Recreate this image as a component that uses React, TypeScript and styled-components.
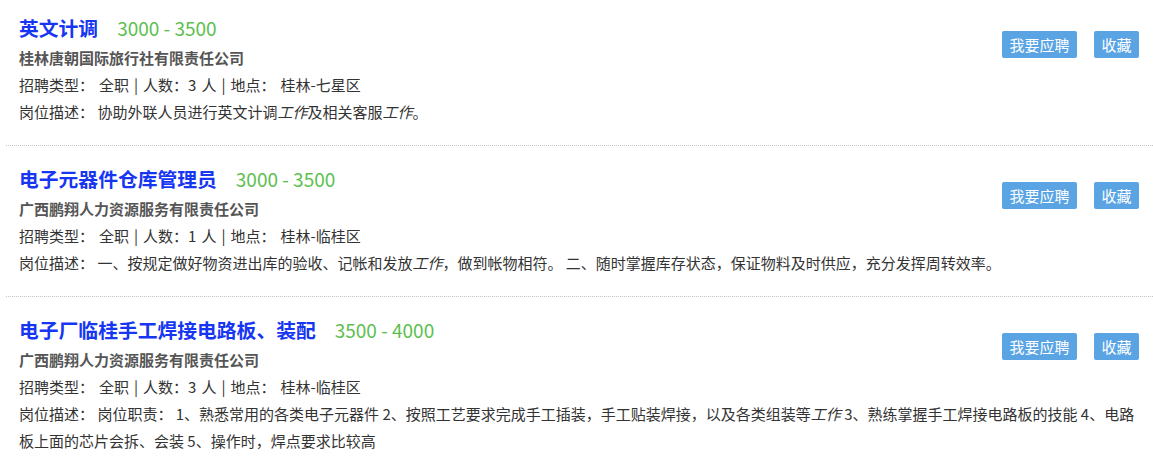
import React from "react";
import styled, { createGlobalStyle } from "styled-components";

const GlobalStyle = createGlobalStyle`
  html, body { margin: 0; padding: 0; background: #fff; }
  body { font-family: "Noto Sans CJK SC", "Microsoft YaHei", sans-serif; }
`;

const List = styled.ul`
  list-style: none;
  margin: 0 0 0 6px;
  padding: 0;
`;

const Item = styled.li`
  display: grid;
  grid-template-columns: 1fr auto;
  padding: 17px 14px 20px 13px;
  border-bottom: 1px dotted #c4c4c4;
  &:first-child { padding-top: 12px; }
  &:last-child { border-bottom: none; }
`;

const Main = styled.div`
  grid-column: 1;
`;

const TitleRow = styled.div`
  display: flex;
  align-items: baseline;
  height: 32px;
  line-height: 32px;
`;

const Title = styled.a`
  font-size: 19.8px;
  font-weight: bold;
  color: #1736f2;
  text-decoration: none;
`;

const Salary = styled.span`
  margin-left: 19px;
  font-size: 19px;
  color: #5cbf4e;
`;

const Company = styled.div`
  font-size: 15px;
  font-weight: bold;
  color: #555;
  line-height: 27px;
`;

const Line = styled.div<{ $span?: boolean }>`
  font-size: 15px;
  color: #333;
  line-height: 27px;
  grid-column: ${(p) => (p.$span ? "1 / -1" : "1")};
`;

const Sep = styled.span`
  margin: 0 5px;
`;

const Gap = styled.span`
  display: inline-block;
  width: 5px;
`;

const Actions = styled.div`
  grid-column: 2;
  grid-row: 1;
  display: flex;
  gap: 17px;
  align-items: flex-start;
  margin-top: 19px;
`;

const Btn = styled.button`
  height: 27px;
  padding: 0 7.5px;
  border: none;
  border-radius: 2px;
  background: #5aa4e4;
  color: #fff;
  font-family: inherit;
  font-size: 15px;
  line-height: 27px;
  cursor: pointer;
`;

type Job = {
  title: string;
  salary: string;
  company: string;
  count: number;
  place: string;
  desc: React.ReactNode;
};

const jobs: Job[] = [
  {
    title: "英文计调",
    salary: "3000 - 3500",
    company: "桂林唐朝国际旅行社有限责任公司",
    count: 3,
    place: "桂林-七星区",
    desc: (
      <>
        协助外联人员进行英文计调<em>工作</em>及相关客服<em>工作</em>。
      </>
    ),
  },
  {
    title: "电子元器件仓库管理员",
    salary: "3000 - 3500",
    company: "广西鹏翔人力资源服务有限责任公司",
    count: 1,
    place: "桂林-临桂区",
    desc: (
      <>
        一、按规定做好物资进出库的验收、记帐和发放<em>工作</em>，做到帐物相符。 二、随时掌握库存状态，保证物料及时供应，充分发挥周转效率。
      </>
    ),
  },
  {
    title: "电子厂临桂手工焊接电路板、装配",
    salary: "3500 - 4000",
    company: "广西鹏翔人力资源服务有限责任公司",
    count: 3,
    place: "桂林-临桂区",
    desc: (
      <>
        岗位职责： 1、熟悉常用的各类电子元器件 2、按照工艺要求完成手工插装，手工贴装焊接，以及各类组装等<em>工作</em> 3、熟练掌握手工焊接电路板的技能 4、电路板上面的芯片会拆、会装 5、操作时，焊点要求比较高
      </>
    ),
  },
];

export default function App() {
  return (
    <>
      <GlobalStyle />
      <List>
        {jobs.map((j, i) => (
          <Item key={i}>
            <Main>
              <TitleRow>
                <Title href="#">{j.title}</Title>
                <Salary>{j.salary}</Salary>
              </TitleRow>
              <Company>{j.company}</Company>
              <Line>
                招聘类型：<Gap />全职<Sep>|</Sep>人数：{j.count}<Gap />人<Sep>|</Sep>地点：<Gap />
                {j.place}
              </Line>
            </Main>
            <Actions>
              <Btn>我要应聘</Btn>
              <Btn>收藏</Btn>
            </Actions>
            <Line $span>岗位描述： {j.desc}</Line>
          </Item>
        ))}
      </List>
    </>
  );
}
